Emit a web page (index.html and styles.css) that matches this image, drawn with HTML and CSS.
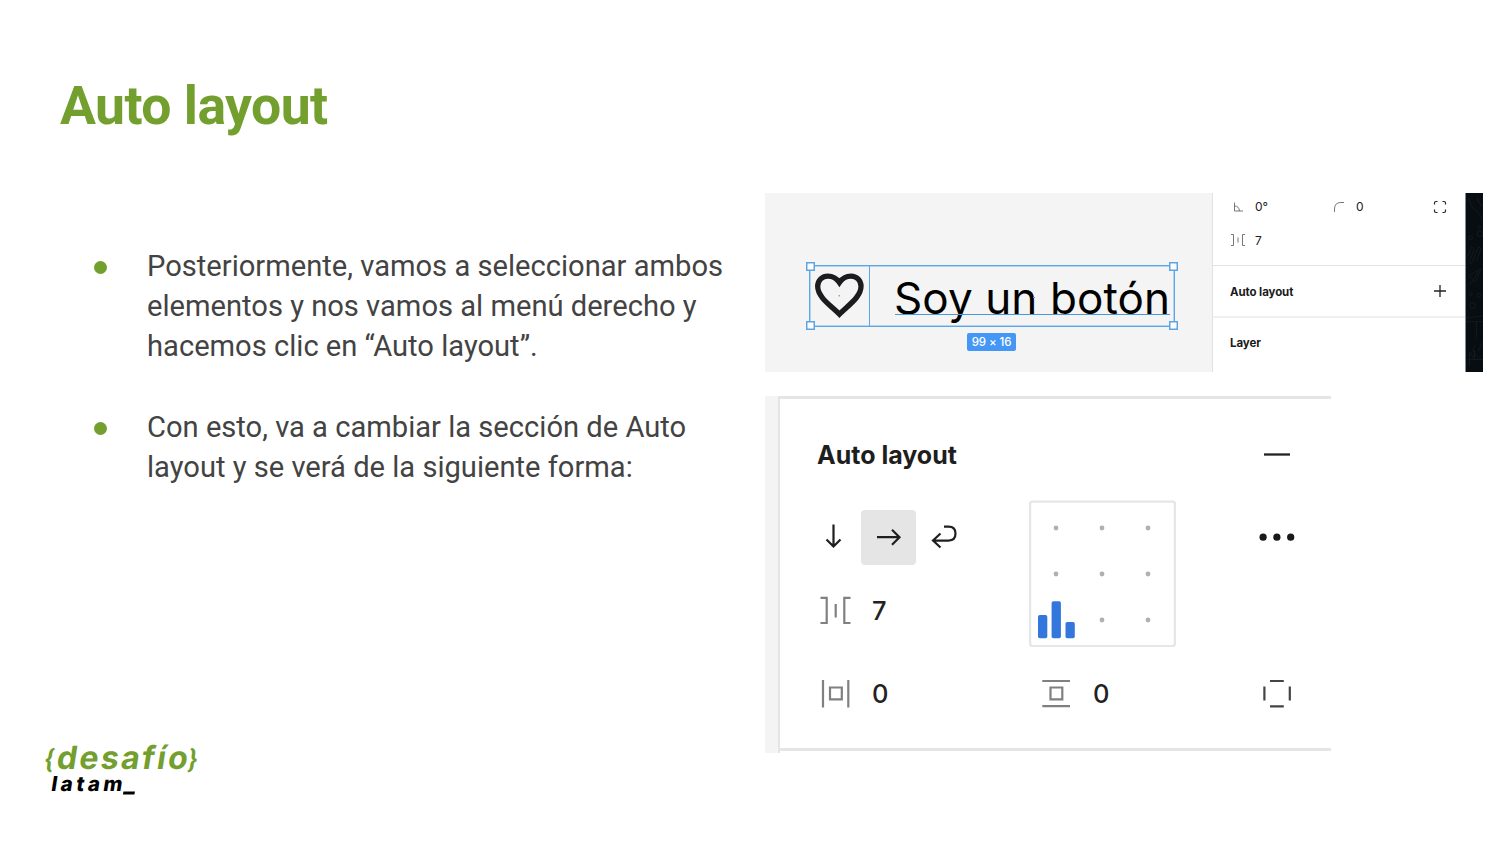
FILE: index.html
```html
<!DOCTYPE html>
<html lang="es">
<head>
<meta charset="utf-8">
<title>Auto layout</title>
<link rel="stylesheet" href="styles.css">
</head>
<body>
<main class="slide">
  <section class="copy">
    <h1 class="title">Auto layout</h1>
    <ul class="points">
      <li><span class="line">Posteriormente, vamos a seleccionar ambos</span><span class="line">elementos y nos vamos al menú derecho y</span><span class="line">hacemos clic en “Auto layout”.</span></li>
      <li><span class="line">Con esto, va a cambiar la sección de Auto</span><span class="line">layout y se verá de la siguiente forma:</span></li>
    </ul>
    <svg class="logo" width="160" height="60" viewBox="40 738 160 60" role="img" aria-label="desafío latam">
      <g class="logo-green">
        <text class="brace" transform="translate(44 767.500) skewX(-8)">{</text>
        <text class="word" transform="translate(55.500 769) skewX(-9)" textLength="131" lengthAdjust="spacing">desafío</text>
        <text class="brace" transform="translate(187.500 767.500) skewX(-8)">}</text>
      </g>
      <text class="sub" transform="translate(50.500 791) skewX(-9)" textLength="71" lengthAdjust="spacing">latam</text>
      <path d="M123.500 791.500h11.500l-.6 3h-11.500z"/>
    </svg>
  </section>

  <section class="figures">
    <div class="editor">
      <div class="canvas">
        <div class="selection">
          <svg class="heart" width="60" height="60" viewBox="809.800 266.300 60 60">
            <path d="M839.700 314.800C831 306 817.600 297.500 817.600 286.500C817.600 280 822.500 276 828 276C833.500 276 837 278.500 839.700 282.500C842.400 278.500 846 276 851.500 276C857 276 861.700 280 861.700 286.500C861.700 297.500 848.300 306 839.700 314.800Z" fill="none" stroke="#1c1c1f" stroke-width="5.400"/>
            <circle cx="839.500" cy="296" r=".8" fill="#d05fd0"/>
          </svg>
          <span class="label">Soy un botón</span>
          <i class="baseline"></i>
          <i class="pin"></i>
          <i class="handle tl"></i><i class="handle tr"></i><i class="handle bl"></i><i class="handle br"></i>
          <span class="size">99 × 16</span>
        </div>
      </div>
      <aside class="props">
        <div class="fields">
          <svg width="14" height="14" viewBox="0 0 14 14" fill="none" stroke="#777"><path d="M3.500 2.500v8.500h8.500M3.500 6q4.500 0 5 5"/></svg>
          <span>0°</span>
          <svg width="14" height="14" viewBox="0 0 14 14" fill="none" stroke="#777"><path d="M2.500 12V9q0-6.500 6.500-6.500h3"/></svg>
          <span>0</span>
          <svg width="14" height="14" viewBox="0 0 14 14" fill="none" stroke="#222" stroke-width="1.200"><path d="M1.500 4.500v-1.500q0-1.500 1.500-1.500h1.500M9.500 1.500h1.500q1.500 0 1.500 1.500v1.500M12.500 9.500v1.500q0 1.500-1.500 1.500h-1.500M4.500 12.500h-1.500q-1.500 0-1.500-1.500v-1.500"/></svg>
        </div>
        <div class="fields second">
          <svg width="15" height="14" viewBox="0 0 15 14" fill="none" stroke="#777"><path d="M0 1.500h2.500v11h-2.500M7 4.500v5M14 1.500h-2.500v11h2.500"/></svg>
          <span>7</span>
        </div>
        <div class="bar"><b>Auto layout</b>
          <svg width="14" height="14" viewBox="0 0 14 14" stroke="#222" stroke-width="1.300"><path d="M7 0v12M1 6h12"/></svg>
        </div>
        <div class="bar last"><b>Layer</b></div>
      </aside>
      <svg class="wall" width="18" height="179" viewBox="0 0 18 179" fill="none" stroke="#151b20">
        <path d="M3 0q2 10 8 14t6 10M12 0q1 6 6 9M2 62l4-10 3 2-5 12q-2 4 2 3l7-17 3 1-5 14M3 82l13-7-6 14zM4 92q6-8 9-14M0 127l18-2M0 131h11v18M11 131h7M4 178v-15l5 8 0-10M13 162q5-12 5-8M10 156q-5 4 0 10t8 6M2 171h16"/>
        <circle cx="5" cy="42" r="2"/><circle cx="15" cy="38" r="3"/><circle cx="14" cy="31" r="1.500"/><circle cx="5" cy="102" r="1.500"/><circle cx="7" cy="114" r="3"/><circle cx="14" cy="103" r="2"/>
      </svg>
    </div>

    <div class="inspector">
      <div class="pane">
        <header class="head"><b>Auto layout</b>
          <svg width="28" height="4" viewBox="0 0 28 4"><path d="M1 1.500h26" stroke="#222" stroke-width="2.300"/></svg>
        </header>
        <div class="flow">
          <div class="flow-left">
            <div class="directions">
              <span class="dir"><svg width="55" height="55" viewBox="806 510 55 55"><path d="M833.500 524.500v22M826.500 539.500l7 7 7-7"/></svg></span>
              <span class="dir active"><svg width="55" height="55" viewBox="861 510 55 55"><path d="M877 537.200h22.500M892 529.700l7.500 7.500-7.500 7.500"/></svg></span>
              <span class="dir"><svg width="55" height="55" viewBox="916 510 55 55"><path d="M944 526.600h4.500q7 0 7 7t-7 7h-15.500M940.500 533.500l-7.500 7 7.500 7"/></svg></span>
            </div>
            <div class="measure gap"><svg width="31" height="28" viewBox="820 596 31 28"><path d="M820.500 597.800h6.200v25.400h-6.200M835.700 604v13.500M850.500 597.800h-6.200v25.400h6.200"/></svg><span class="seven">7</span></div>
          </div>
          <svg class="align" width="147" height="147" viewBox="1029 500 147 147">
            <rect x="1030.100" y="501.600" width="144.800" height="144.500" rx="2.500" fill="#fff" stroke="#e6e6e6" stroke-width="2.300"/>
            <g fill="#b0b0b0"><circle cx="1056" cy="528" r="2.400"/><circle cx="1102" cy="528" r="2.400"/><circle cx="1148" cy="528" r="2.400"/><circle cx="1056" cy="574" r="2.400"/><circle cx="1102" cy="574" r="2.400"/><circle cx="1148" cy="574" r="2.400"/><circle cx="1102" cy="620" r="2.400"/><circle cx="1148" cy="620" r="2.400"/></g>
            <g fill="#3376dc"><rect x="1038" y="615" width="9.300" height="23.300" rx="1.800"/><rect x="1051.600" y="601.300" width="9.300" height="37" rx="1.800"/><rect x="1065.500" y="622" width="9.300" height="16.300" rx="1.800"/></g>
          </svg>
          <svg class="more" width="36" height="10" viewBox="1259 532 36 10" fill="#191919"><circle cx="1263.100" cy="537.200" r="3.600"/><circle cx="1276.900" cy="537.200" r="3.600"/><circle cx="1290.700" cy="537.200" r="3.600"/></svg>
        </div>
        <div class="paddings">
          <div class="measure"><svg width="31" height="28" viewBox="820 680 31 28"><path d="M823 680v27.500M848.300 680v27.500M830 687.500h11.800v11.800h-11.800z"/></svg><span>0</span></div>
          <div class="measure"><svg width="31" height="28" viewBox="1041 680 31 28"><path d="M1042.300 680.800h27.700M1042.300 706.200h27.700M1050.500 687.500h11.800v11.800h-11.800z"/></svg><span>0</span></div>
          <svg class="sides" width="28" height="28" viewBox="1263 680 28 28"><path d="M1270 680.900h13.800M1270 706.300h13.800M1264.400 686.500v14M1289.800 686.500v14"/></svg>
        </div>
      </div>
    </div>
  </section>
</main>
</body>
</html>
```

FILE: styles.css
```css
* { box-sizing: border-box; }
body { margin: 0; background: #fff; }
svg { display: block; flex: none; }

.slide {
  width: 1500px;
  height: 844px;
  overflow: hidden;
  display: grid;
  grid-template-columns: 765px 718px;
  background: #fff;
  font-family: Roboto, "Liberation Sans", sans-serif;
}

.copy { display: flex; flex-direction: column; padding: 74px 0 0 40px; }
.title {
  margin: 0 0 0 20px;
  height: 172px;
  font-size: 53.5px;
  line-height: 64px;
  font-weight: 700;
  letter-spacing: -0.55px;
  color: #729f2e;
}
.points {
  list-style: none;
  margin: 0;
  padding: 0 0 0 107px;
  height: 492px;
  font-size: 29.13px;
  line-height: 40.2px;
  color: #434343;
}
.points li { position: relative; margin-bottom: 40.2px; }
.points li::before {
  content: "";
  position: absolute;
  left: -53px;
  top: 15px;
  width: 13px;
  height: 13px;
  border-radius: 50%;
  background: #729f2e;
}
.line { display: block; white-space: nowrap; }

.logo { font-family: Inter, Roboto, sans-serif; font-weight: 700; }
.logo-green { fill: #729f2e; }
.brace { font-family: Roboto, sans-serif; font-size: 26px; font-weight: 700; }
.word { font-size: 32px; }
.sub { font-size: 20.5px; font-weight: 800; }

.figures {
  padding-top: 193px;
  display: flex;
  flex-direction: column;
  gap: 24px;
  font-family: Inter, Roboto, sans-serif;
}
.editor { display: flex; width: 718px; height: 179px; }
.canvas { position: relative; width: 447px; background: #f4f4f4; }
.selection {
  position: absolute;
  left: 44px;
  top: 72px;
  width: 366px;
  height: 62px;
  border: 1px solid #5ea6e3;
  box-shadow: inset 0 0 0 1px #b4d5f2;
}
.heart { width: 60px; height: 60px; border-right: 1px solid #5ea6e3; }
.label {
  position: absolute;
  left: 84px;
  top: 5px;
  font-size: 44px;
  line-height: 54px;
  letter-spacing: 0.100px;
  white-space: nowrap;
  color: #000;
}
.baseline { position: absolute; left: 85px; top: 48px; width: 275px; height: 1px; background: #4b97dc; }
.pin { position: absolute; left: 223px; top: 31px; width: 2px; height: 1px; background: #d05fd0; }
.handle { position: absolute; width: 9px; height: 9px; border: 1.500px solid #5ea6e3; box-shadow: inset 0 0 0 .5px #5ea6e3; background: #fff; }
.tl { left: -4px; top: -4px; }
.tr { right: -4px; top: -4px; }
.bl { left: -4px; bottom: -4px; }
.br { right: -4px; bottom: -4px; }
.size {
  position: absolute;
  left: 157px;
  top: 67px;
  width: 49px;
  height: 18px;
  border-radius: 2px;
  background: #4597f5;
  color: #fff;
  font-size: 11.5px;
  line-height: 19px;
  font-weight: 500;
  letter-spacing: -0.100px;
  text-align: center;
  white-space: nowrap;
}

.props { width: 254px; border-left: 1px solid #e2e2e2; border-right: 1px solid #85878a; background: #fff; font-size: 12px; color: #222; }
.fields {
  display: grid;
  grid-template-columns: 24px 77px 24px 77px 14px;
  align-items: center;
  height: 27px;
  padding-left: 18px;
}
.fields.second { height: 46px; padding-bottom: 5px; border-bottom: 1px solid #e2e2e2; }
.bar {
  display: flex;
  justify-content: space-between;
  align-items: center;
  height: 52px;
  padding: 1px 18px 0 17px;
  border-bottom: 2px solid #f0f0f0;
}
.bar.last { border: 0; height: 50px; padding-top: 0; }
.bar b { font-size: 11.5px; font-weight: 700; letter-spacing: -0.100px; color: #1a1a1a; }
.wall { width: 17px; background: #080d12; }

.inspector { width: 566px; height: 357px; padding-left: 13px; background: linear-gradient(90deg, #f4f4f4 13px, #fff 13px); }
.pane {
  height: 357px;
  border-left: 2px solid #e5e5e5;
  border-top: 3px solid #e5e5e5;
  padding-bottom: 2px;
}
.head { display: flex; align-items: center; justify-content: space-between; height: 101px; padding: 10px 40px 0 37px; }
.head b { font-size: 25px; font-weight: 700; color: #1e1e1e; }
.flow { display: flex; height: 147px; }
.flow-left { width: 249px; padding: 10px 0 0 26px; }
.directions { display: flex; }
.dir svg { fill: none; stroke: #1f1f1f; stroke-width: 2.200px; }
.dir.active { border-radius: 4px; background: #e5e5e5; }
.measure { display: flex; align-items: center; gap: 21px; font-size: 25.5px; font-weight: 450; line-height: 28px; color: #222; }
.measure svg { fill: none; stroke: #808080; stroke-width: 2.200px; }
.gap { align-items: flex-start; padding: 31px 0 0 14px; }
.seven { padding-top: 1px; }
.more { margin: 32px 0 0 83px; }
.paddings {
  display: grid;
  grid-template-columns: 221px 222px 28px;
  align-items: start;
  height: 104px;
  padding: 33px 0 0 40px;
  border-bottom: 3px solid #e5e5e5;
}
.sides { fill: none; stroke: #444; stroke-width: 2.200px; }
```
